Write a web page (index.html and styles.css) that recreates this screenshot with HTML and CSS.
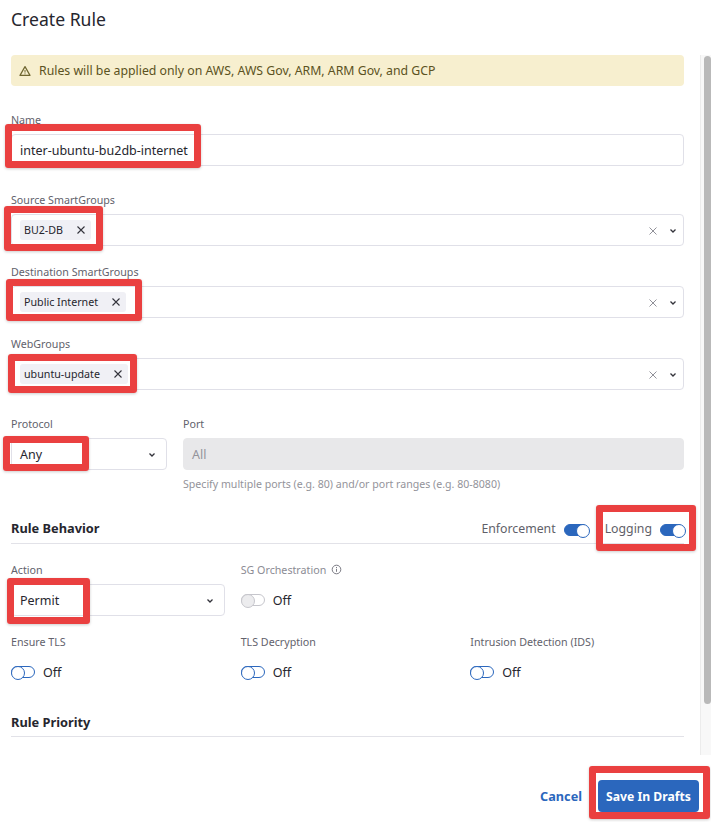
FILE: index.html
```html
<!DOCTYPE html>
<html lang="en">
<head>
<meta charset="utf-8">
<title>Create Rule</title>
<link rel="stylesheet" href="styles.css">
</head>
<body>
<div class="dialog">
  <h1 class="title">Create Rule</h1>
  <div class="middle">
    <div class="form">
      <div class="alert">
        <svg class="alert-icon" viewBox="0 0 12 12" width="12" height="12"><path d="M6 1.6 11 10.4H1Z" fill="none" stroke="currentColor" stroke-width="1.2" stroke-linejoin="round"/><path d="M6 5v2.6M6 8.4v.9" stroke="currentColor" stroke-width="1"/></svg>
        <span>Rules will be applied only on AWS, AWS Gov, ARM, ARM Gov, and GCP</span>
      </div>

      <div class="field spaced">
        <label class="label">Name</label>
        <div class="control"><span class="value">inter-ubuntu-bu2db-internet</span></div>
      </div>

      <div class="field">
        <label class="label">Source SmartGroups</label>
        <div class="control multi">
          <span class="chip">BU2-DB<svg class="chip-x" viewBox="0 0 8 8" width="8" height="8"><path d="M.5.5l7 7M7.500.5l-7 7" stroke="currentColor" stroke-width="1.100"/></svg></span>
          <span class="tools"><svg class="clear" viewBox="0 0 8 8" width="8" height="8"><path d="M.5.5l7 7M7.500.5l-7 7" stroke="currentColor" stroke-width=".9"/></svg><svg class="caret" viewBox="0 0 8 6" width="8" height="6"><path d="M1.500 1.500 4 4 6.500 1.500" fill="none" stroke="currentColor" stroke-width="1.300"/></svg></span>
        </div>
      </div>

      <div class="field">
        <label class="label">Destination SmartGroups</label>
        <div class="control multi">
          <span class="chip">Public Internet<svg class="chip-x" viewBox="0 0 8 8" width="8" height="8"><path d="M.5.5l7 7M7.500.5l-7 7" stroke="currentColor" stroke-width="1.100"/></svg></span>
          <span class="tools"><svg class="clear" viewBox="0 0 8 8" width="8" height="8"><path d="M.5.5l7 7M7.500.5l-7 7" stroke="currentColor" stroke-width=".9"/></svg><svg class="caret" viewBox="0 0 8 6" width="8" height="6"><path d="M1.500 1.500 4 4 6.500 1.500" fill="none" stroke="currentColor" stroke-width="1.300"/></svg></span>
        </div>
      </div>

      <div class="field spaced">
        <label class="label">WebGroups</label>
        <div class="control multi">
          <span class="chip">ubuntu-update<svg class="chip-x" viewBox="0 0 8 8" width="8" height="8"><path d="M.5.5l7 7M7.500.5l-7 7" stroke="currentColor" stroke-width="1.100"/></svg></span>
          <span class="tools"><svg class="clear" viewBox="0 0 8 8" width="8" height="8"><path d="M.5.5l7 7M7.500.5l-7 7" stroke="currentColor" stroke-width=".9"/></svg><svg class="caret" viewBox="0 0 8 6" width="8" height="6"><path d="M1.500 1.500 4 4 6.500 1.500" fill="none" stroke="currentColor" stroke-width="1.300"/></svg></span>
        </div>
      </div>

      <div class="grid-four">
        <div class="field">
          <label class="label">Protocol</label>
          <div class="control select"><span class="value">Any</span><svg class="caret" viewBox="0 0 8 6" width="8" height="6"><path d="M1.500 1.500 4 4 6.500 1.500" fill="none" stroke="currentColor" stroke-width="1.300"/></svg></div>
        </div>
        <div class="field port">
          <label class="label">Port</label>
          <div class="control disabled"><span class="value">All</span></div>
          <p class="help">Specify multiple ports (e.g. 80) and/or port ranges (e.g. 80-8080)</p>
        </div>
      </div>

      <div class="section-head behavior">
        <h2 class="section-title">Rule Behavior</h2>
        <div class="head-toggles">
          <span class="head-toggle">Enforcement<span class="toggle on"></span></span>
          <span class="head-toggle">Logging<span class="toggle on"></span></span>
        </div>
      </div>

      <div class="grid-three">
        <div class="field">
          <label class="label">Action</label>
          <div class="control select"><span class="value">Permit</span><svg class="caret" viewBox="0 0 8 6" width="8" height="6"><path d="M1.500 1.500 4 4 6.500 1.500" fill="none" stroke="currentColor" stroke-width="1.300"/></svg></div>
        </div>
        <div class="field wide">
          <label class="label muted">SG Orchestration<svg class="info" viewBox="0 0 12 12" width="11" height="11"><circle cx="6" cy="6" r="4.700" fill="none" stroke="currentColor"/><path d="M6 5.300v3.200M6 3.300v1.100" stroke="currentColor"/></svg></label>
          <div class="switch-row"><span class="toggle locked"></span><span class="off">Off</span></div>
        </div>
        <div class="field">
          <label class="label">Ensure TLS</label>
          <div class="switch-row"><span class="toggle"></span><span class="off">Off</span></div>
        </div>
        <div class="field">
          <label class="label">TLS Decryption</label>
          <div class="switch-row"><span class="toggle"></span><span class="off">Off</span></div>
        </div>
        <div class="field">
          <label class="label">Intrusion Detection (IDS)</label>
          <div class="switch-row"><span class="toggle"></span><span class="off">Off</span></div>
        </div>
      </div>

      <div class="section-head priority">
        <h2 class="section-title">Rule Priority</h2>
      </div>
    </div>
    <div class="scrollbar"><div class="thumb"></div></div>
  </div>
  <div class="footer">
    <a class="cancel">Cancel</a>
    <button class="save">Save In Drafts</button>
  </div>
</div>
<div class="mark mark-name"></div>
<div class="mark mark-source"></div>
<div class="mark mark-dest"></div>
<div class="mark mark-web"></div>
<div class="mark mark-protocol"></div>
<div class="mark mark-logging"></div>
<div class="mark mark-action"></div>
<div class="mark mark-save"></div>
</body>
</html>
```

FILE: styles.css
```css
* { box-sizing: border-box; }
html, body { margin: 0; height: 100%; background: #fff; overflow: hidden; }
body { position: relative; font-family: "Noto Sans", "Open Sans", sans-serif; color: #26262e; }
.dialog { width: 711px; height: 822px; display: flex; flex-direction: column; }
.title { margin: 0; height: 55px; padding: 7px 0 0 11px; font-size: 17.600px; line-height: 24px; font-weight: 400; color: #26262e; }
.middle { height: 700px; display: flex; }
.form { flex: 1; padding: 0 16px 0 11px; overflow: hidden; }
.alert { height: 31px; background: #f7efcf; border-radius: 4px; display: flex; align-items: center; gap: 8px; padding-left: 8px; font-size: 12.300px; color: #5b5222; margin-bottom: 27px; }
.alert-icon { color: #6f6630; }
.field { margin-bottom: 19px; min-width: 0; }
.field.spaced { margin-bottom: 27px; }
.label { display: flex; align-items: center; height: 14px; line-height: 14px; margin-bottom: 7px; font-size: 10.700px; color: #62626c; white-space: nowrap; }
.label.muted { color: #8b8b94; }
.control { height: 32px; border: 1px solid #e0e0e8; border-radius: 4px; display: flex; align-items: center; padding: 0 8px; background: #fff; }
.value { font-size: 12.500px; color: #26262e; }
.multi { justify-content: space-between; padding-right: 6px; }
.chip { height: 20px; display: inline-flex; align-items: center; gap: 14px; padding: 0 6px 0 4px; background: #f0f0f5; border-radius: 3px; font-size: 10.700px; color: #26262e; }
.chip-x { color: #33333b; }
.tools { display: flex; align-items: center; gap: 12px; }
.clear { color: #85858d; margin-top: 2px; }
.caret { color: #33333b; margin-top: 1px; }
.select { justify-content: space-between; padding-right: 10px; }
.disabled { background: #e8e8ea; border-color: #e8e8ea; }
.disabled .value { color: #93939a; }
.grid-four { display: grid; grid-template-columns: 156px 1fr; column-gap: 16px; }
.port { margin-bottom: 0; }
.help { margin: 7px 0 0; height: 14px; line-height: 14px; font-size: 10.600px; color: #93939a; white-space: nowrap; }
.section-head { display: flex; align-items: center; justify-content: space-between; border-bottom: 1px solid #e2e2e8; }
.behavior { height: 28px; margin-top: 25px; margin-bottom: 19px; padding-bottom: 3px; }
.section-title { margin: 0; font-size: 12.800px; font-weight: 700; color: #26262e; }
.head-toggles { display: flex; gap: 17px; }
.head-toggle { display: inline-flex; align-items: center; gap: 8px; font-size: 12.300px; color: #5f5f69; }
.head-toggle .toggle { margin-top: 3px; }
.toggle { position: relative; display: inline-block; width: 24px; height: 12px; border-radius: 6px; border: 1px solid #2b67bd; background: #fff; flex: none; }
.toggle::after { content: ""; position: absolute; left: -1px; top: -1px; width: 12px; height: 12px; border-radius: 50%; background: #fff; border: 1px solid #2b67bd; }
.toggle.on { background: #2b67bd; }
.toggle.on::after { left: 11px; }
.toggle.locked { border-color: #c6c6cc; }
.toggle.locked::after { border-color: #c6c6cc; background: #ececee; }
.grid-three { display: grid; grid-template-columns: repeat(3, 1fr); column-gap: 16px; }
.wide { grid-column: span 2; }
.info { margin: -2px 0 0 5px; color: #6f6f78; }
.switch-row { height: 32px; display: flex; align-items: center; gap: 8px; }
.off { font-size: 12.500px; color: #26262e; }
.priority { height: 28px; margin-top: 2px; padding-bottom: 2px; }
.scrollbar { width: 11px; flex: none; border-left: 1px solid #ececec; background: #f8f8f8; padding-left: 3px; }
.thumb { height: 648px; margin-top: 1px; background: #b9b9b9; border-radius: 4px; }
.footer { flex: 1; display: flex; justify-content: flex-end; align-items: flex-start; gap: 16px; padding: 25px 12px 0 0; }
.cancel { line-height: 32px; font-size: 12.700px; font-weight: 700; color: #2b67bd; }
.save { width: 101px; height: 32px; border: 0; border-radius: 4px; background: #2b67bd; color: #fff; font: 700 12.200px "Noto Sans", sans-serif; padding: 0; }
.mark { position: absolute; border: 7px solid #ea4040; border-radius: 3px; box-shadow: 0 1px 3px rgba(0,0,0,.2); }
.mark-name { left: 5px; top: 124px; width: 196px; height: 44px; }
.mark-source { left: 4px; top: 206px; width: 99px; height: 45px; }
.mark-dest { left: 6px; top: 279px; width: 136px; height: 42px; }
.mark-web { left: 8px; top: 354px; width: 129px; height: 39px; }
.mark-protocol { left: 3px; top: 436px; width: 86px; height: 35px; }
.mark-logging { left: 596px; top: 505px; width: 100px; height: 46px; }
.mark-action { left: 7px; top: 578px; width: 83px; height: 46px; }
.mark-save { left: 589px; top: 766px; width: 121px; height: 53px; }
```
